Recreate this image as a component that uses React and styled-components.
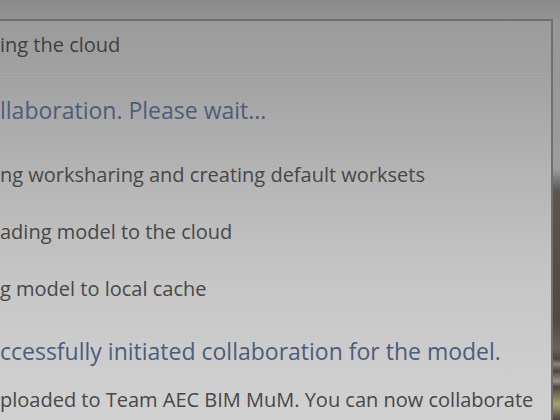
import React from "react";
import styled, { createGlobalStyle } from "styled-components";

const Global = createGlobalStyle`
  html, body { margin: 0; padding: 0; background: #8f8f8f; }
  body { width: 560px; height: 420px; overflow: hidden; font-family: "Open Sans", "Noto Sans", sans-serif; }
`;

const Page = styled.div`
  width: 560px;
  height: 420px;
  display: flex;
  flex-direction: column;
  background: #939393;
  overflow: hidden;
`;

const TopBand = styled.div`
  height: 19px;
  flex: none;
  background: linear-gradient(180deg, #8a8a8a, #939393);
`;

const Body = styled.div`
  flex: 1;
  display: flex;
`;

const Dialog = styled.div`
  width: 551px;
  flex: none;
  border-top: 2px solid #6f6f6f;
  border-right: 2px solid #707070;
  background: linear-gradient(180deg, #9b9b9b 0px, #a3a3a3 60px, #b4b4b4 150px, #c6c6c6 260px, #cdcdcd 340px, #d1d1d1 401px);
  display: flex;
  flex-direction: column;
  overflow: hidden;
`;

const SideStrip = styled.div`
  flex: 1;
  background: linear-gradient(180deg, #979797 0px, #9c9c9c 150px, #5a5550 172px, #4f4a44 300px, #6a6259 330px, #4b4640 340px, #8a8680 345px, #4a453f 352px, #9a958a 362px, #4c4741 368px, #a89f70 385px, #4c4741 401px);
`;

const Title = styled.div`
  margin-top: 11px;
  height: 26px;
  line-height: 26px;
  font-size: 20px;
  color: #3f3f3f;
  white-space: nowrap;
`;

const Divider = styled.div`
  margin-top: 15px;
  height: 1px;
  background: #a7a7a7;
`;

const Heading = styled.div`
  margin-top: ${(p) => p.$top}px;
  height: 30px;
  line-height: 30px;
  font-size: 23px;
  color: #4d5c7c;
  white-space: nowrap;
`;

const Steps = styled.div`
  margin-top: 37px;
  display: flex;
  flex-direction: column;
  gap: 31px;
`;

const Line = styled.div`
  margin-top: ${(p) => p.$top || 0}px;
  height: 26px;
  line-height: 26px;
  font-size: 20px;
  color: #474747;
  white-space: nowrap;
`;

export default function App() {
  return (
    <>
      <Global />
      <Page>
        <TopBand />
        <Body>
          <Dialog>
            <Title>ing the cloud</Title>
            <Divider />
            <Heading $top={21}>llaboration. Please wait...</Heading>
            <Steps>
              <Line>ng worksharing and creating default worksets</Line>
              <Line>ading model to the cloud</Line>
              <Line>g model to local cache</Line>
            </Steps>
            <Heading $top={34}>ccessfully initiated collaboration for the model.</Heading>
            <Line $top={21}>ploaded to Team AEC BIM MuM. You can now collaborate</Line>
          </Dialog>
          <SideStrip />
        </Body>
      </Page>
    </>
  );
}
